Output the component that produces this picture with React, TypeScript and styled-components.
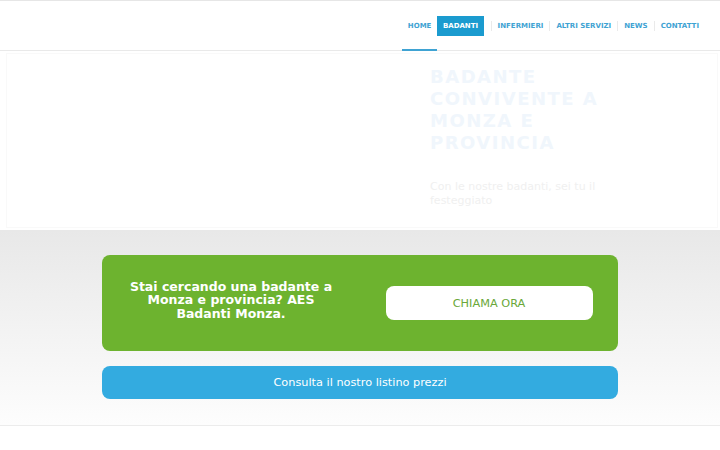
import styled, { createGlobalStyle } from "styled-components";

const GlobalStyle = createGlobalStyle`
  body {
    margin: 0;
    background: #ffffff;
    font-family: "DejaVu Sans", "Liberation Sans", sans-serif;
  }
  * { box-sizing: border-box; }
`

const Header = styled.header`
  height: 51px;
  border-top: 1px solid #e6e6e6;
  border-bottom: 1px solid #e9e9e9;
  display: flex;
  justify-content: flex-end;
  align-items: stretch;
  padding-right: 15px;
`
const Nav = styled.nav`
  display: flex;
  align-items: center;
`
const NavItem = styled.a<{ $active?: boolean; $current?: boolean }>`
  position: relative;
  height: 100%;
  display: flex;
  align-items: center;
  padding: ${(p) => (p.$active ? "0 7px 0 0" : "0 6px")};
  font-size: 7px;
  font-weight: bold;
  color: #3fa3d3;
  text-decoration: none;

  span {
    display: block;
    padding: ${(p) => (p.$active ? "6px 5.5px" : "0")};
    background: ${(p) => (p.$active ? "#1b9bcf" : "transparent")};
    color: ${(p) => (p.$active ? "#ffffff" : "#3fa3d3")};
  }

  &::after {
    content: "";
    display: ${(p) => (p.$current ? "block" : "none")};
    position: absolute;
    left: 0;
    right: 0;
    bottom: -1px;
    height: 2px;
    background: #3fa3d3;
  }
`
const Sep = styled.i`
  width: 1px;
  height: 10px;
  background: #eaeaea;
`

const Hero = styled.section`
  height: 179px;
  padding: 2px 2px 2px 6px;
`
const HeroInner = styled.div`
  height: 100%;
  border: 1px solid #f9f9f9;
  display: grid;
  grid-template-columns: 423px 1fr;
`
const HeroText = styled.div`
  padding-top: 12px;
`
const HeroTitle = styled.h1`
  margin: 0;
  width: 185px;
  font-size: 18px;
  line-height: 22px;
  letter-spacing: 1.5px;
  font-weight: bold;
  color: #f0f6fc;
`
const HeroSub = styled.p`
  margin: 26px 0 0;
  width: 175px;
  font-size: 11px;
  line-height: 14px;
  color: #f0f0f0;
`

const Band = styled.section`
  height: 196px;
  padding-top: 25px;
  background: linear-gradient(#e8e8e8, #fdfdfd);
  border-bottom: 1px solid #ececec;
  display: flex;
  flex-direction: column;
  align-items: center;
  gap: 15px;
`
const CallBox = styled.div`
  width: 516px;
  height: 96px;
  border-radius: 8px;
  background: #6db32f;
  display: grid;
  grid-template-columns: 1fr 1fr;
  align-items: center;
`
const CallText = styled.p`
  margin: -6px 0 0;
  text-align: center;
  font-size: 12.5px;
  line-height: 13.5px;
  font-weight: bold;
  color: #ffffff;
`
const CallButton = styled.a`
  justify-self: center;
  width: 207px;
  height: 34px;
  border-radius: 8px;
  background: #ffffff;
  display: flex;
  align-items: center;
  justify-content: center;
  padding-top: 1px;
  font-size: 11.3px;
  color: #6aa83a;
`
const PriceBar = styled.a`
  width: 516px;
  height: 33px;
  border-radius: 8px;
  background: #33abe0;
  display: flex;
  align-items: center;
  justify-content: center;
  font-size: 11.3px;
  color: #ffffff;
`

export default function App() {
  return (
    <>
      <GlobalStyle />
      <Header>
        <Nav>
          <NavItem $current><span>HOME</span></NavItem>
          <NavItem $active><span>BADANTI</span></NavItem>
          <Sep />
          <NavItem><span>INFERMIERI</span></NavItem>
          <Sep />
          <NavItem><span>ALTRI SERVIZI</span></NavItem>
          <Sep />
          <NavItem><span>NEWS</span></NavItem>
          <Sep />
          <NavItem><span>CONTATTI</span></NavItem>
        </Nav>
      </Header>
      <Hero>
        <HeroInner>
          <div />
          <HeroText>
            <HeroTitle>BADANTE CONVIVENTE A MONZA E PROVINCIA</HeroTitle>
            <HeroSub>Con le nostre badanti, sei tu il festeggiato</HeroSub>
          </HeroText>
        </HeroInner>
      </Hero>
      <Band>
        <CallBox>
          <CallText>
            Stai cercando una badante a<br />
            Monza e provincia? AES<br />
            Badanti Monza.
          </CallText>
          <CallButton>CHIAMA ORA</CallButton>
        </CallBox>
        <PriceBar>Consulta il nostro listino prezzi</PriceBar>
      </Band>
    </>
  );
}
